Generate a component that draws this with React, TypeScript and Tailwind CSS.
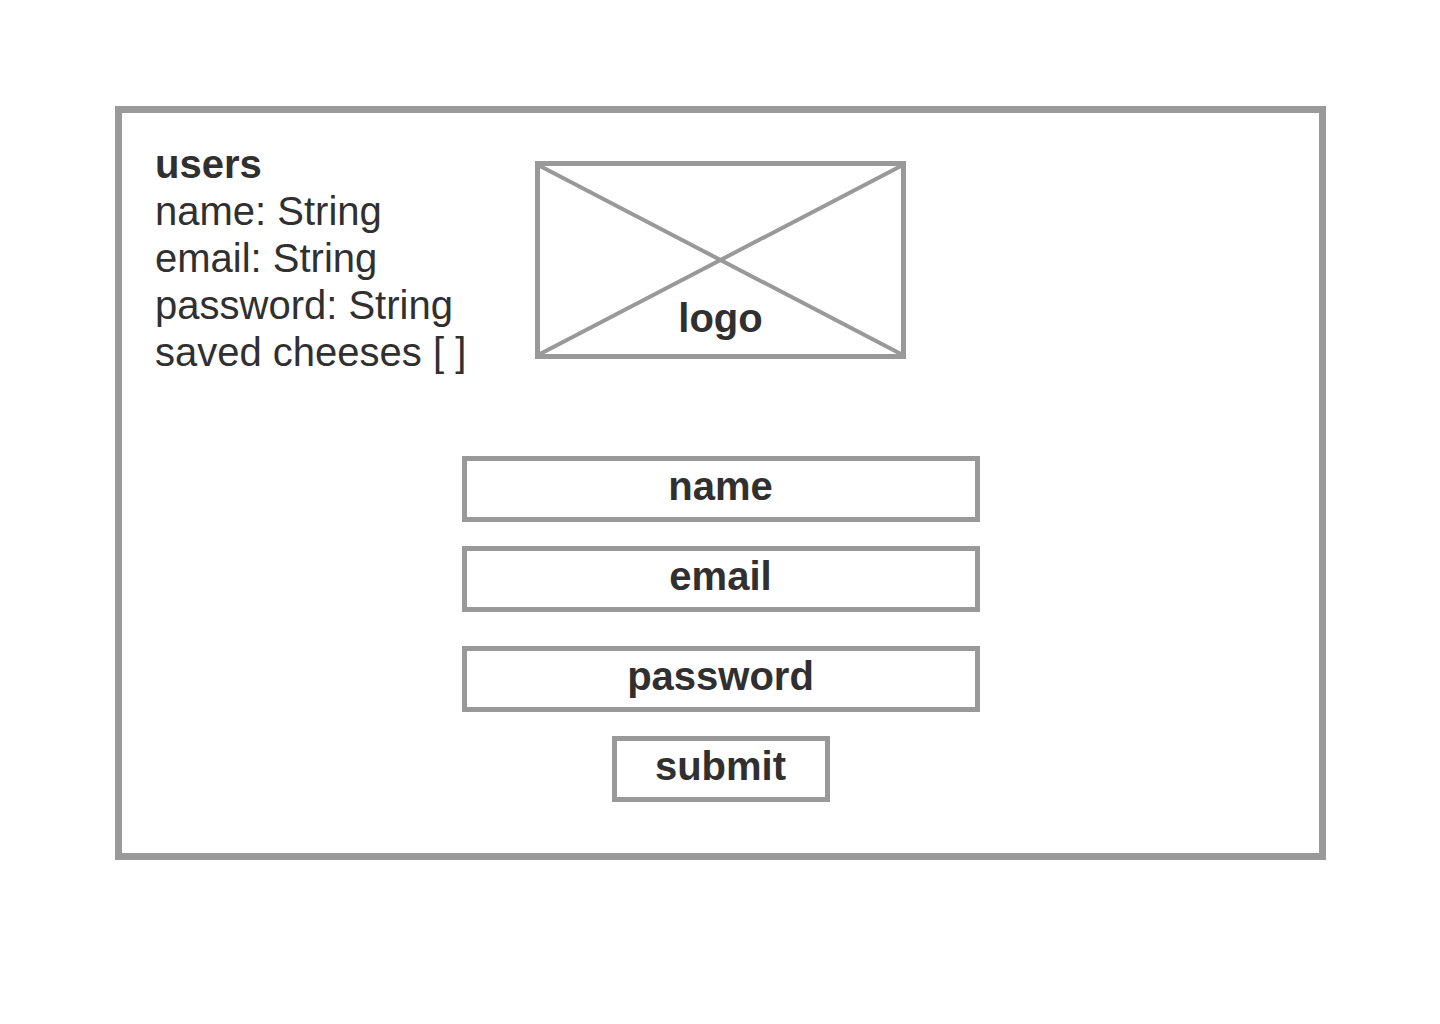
const font = { fontFamily: '"Liberation Sans", Arial, Helvetica, sans-serif' };

const schemaLines = ["name: String", "email: String", "password: String", "saved cheeses [ ]"];

const FieldBox = ({ label, className }: { label: string; className: string }) => (
  <div
    className={`flex h-[66px] justify-center border-[5px] border-[#999999] pt-[2px] text-center text-[40px] font-bold leading-[47px] text-[#303030] ${className}`}
  >
    {label}
  </div>
);

const LogoPlaceholder = () => (
  <div className="relative mt-[20px] flex h-[198px] w-[371px] items-end justify-center border-[5px] border-[#999999] pb-[12px]">
    <svg
      className="absolute inset-0 h-full w-full"
      viewBox="0 0 100 100"
      preserveAspectRatio="none"
    >
      <line x1="0" y1="0" x2="100" y2="100" stroke="#999999" strokeWidth="4" vectorEffect="non-scaling-stroke" />
      <line x1="100" y1="0" x2="0" y2="100" stroke="#999999" strokeWidth="4" vectorEffect="non-scaling-stroke" />
    </svg>
    <span className="relative text-[40px] font-bold leading-[47px] text-[#303030]">logo</span>
  </div>
);

export default function App() {
  return (
    <div className="min-h-screen bg-white pl-[115px] pt-[106px]" style={font}>
      <div className="h-[754px] w-[1211px] border-[7px] border-[#999999] px-[30px] pt-[28px]">
        <div className="grid grid-cols-[1fr_371px_1fr] items-start">
          <div className="pl-[3px] text-[40px] leading-[47px] text-[#303030]">
            <div className="font-bold">users</div>
            {schemaLines.map((line) => (
              <div key={line} className="whitespace-nowrap">
                {line}
              </div>
            ))}
          </div>
          <LogoPlaceholder />
          <div />
        </div>

        <div className="mt-[80px] flex flex-col items-center">
          <FieldBox label="name" className="w-[518px]" />
          <FieldBox label="email" className="mt-[24px] w-[518px]" />
          <FieldBox label="password" className="mt-[34px] w-[518px]" />
          <FieldBox label="submit" className="mt-[24px] w-[218px]" />
        </div>
      </div>
    </div>
  );
}
